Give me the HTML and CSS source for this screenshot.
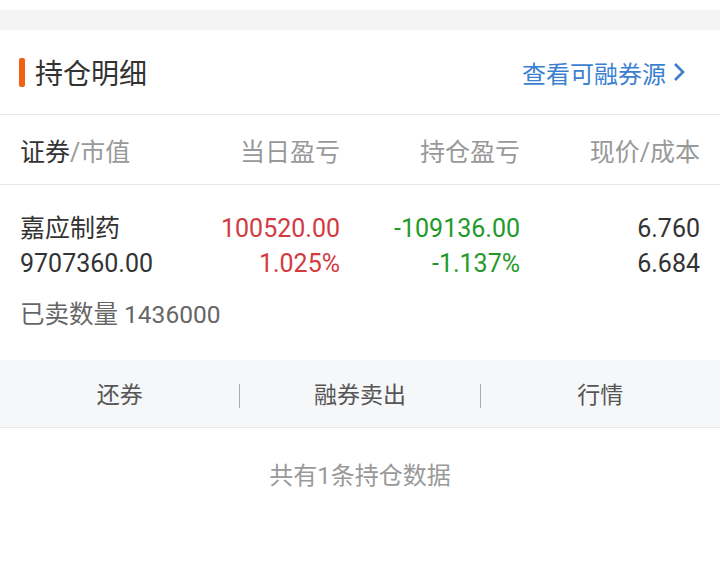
FILE: index.html
```html
<html lang="zh-CN">

<head>
  <meta charset="utf-8" />
  <title>持仓明细</title>
  <meta name="viewport" content="width=device-width, initial-scale=1" />
  <link rel="stylesheet" href="styles.css">
</head>

<body>
  <div class="gap"></div>

  <div class="head">
    <div class="head-title">
      <span class="mark"></span>
      <span>持仓明细</span>
    </div>
    <a class="head-link" href="#">
      查看可融券源
      <svg width="14" height="22" viewBox="0 0 14 22">
        <path d="M3 3 L11 11 L3 19" fill="none" stroke="#3b7fd1" stroke-width="2.6" />
      </svg>
    </a>
  </div>

  <div class="grid cols">
    <div><span class="dark">证券</span>/市值</div>
    <div class="num">当日盈亏</div>
    <div class="num">持仓盈亏</div>
    <div class="num">现价/成本</div>
  </div>

  <div class="item">
    <div class="grid">
      <div class="dark">嘉应制药<br>9707360.00</div>
      <div class="num up">100520.00<br>1.025%</div>
      <div class="num down">-109136.00<br>-1.137%</div>
      <div class="num dark">6.760<br>6.684</div>
    </div>
    <div class="sold">已卖数量 1436000</div>
  </div>

  <div class="actions">
    <a href="#">还券</a>
    <a href="#">融券卖出</a>
    <a href="#">行情</a>
  </div>

  <div class="total">共有1条持仓数据</div>
</body>

</html>
```

FILE: styles.css
```css
body {
  font-family: Roboto, 'Noto Sans CJK SC', sans-serif;
  margin: 0;
  background: #fff;
  color: #333;
}

* {
  box-sizing: border-box;
}

a {
  text-decoration: none;
  color: inherit;
}

.gap {
  margin-top: 10px;
  height: 20px;
  background: #f4f4f4;
}

.head {
  height: 85px;
  display: flex;
  align-items: center;
  justify-content: space-between;
  padding: 0 34px 0 19px;
  border-bottom: 1px solid #e8e8e8;
}

.head-title {
  display: flex;
  align-items: center;
  gap: 10px;
  font-size: 28px;
  color: #333;
}

.mark {
  width: 6px;
  height: 29px;
  border-radius: 2px;
  background: #ee6212;
}

.head-link {
  display: flex;
  align-items: center;
  gap: 6px;
  font-size: 24px;
  color: #3b7fd1;
}

.grid {
  display: grid;
  grid-template-columns: 1fr 180px 180px 180px;
  padding: 0 20px;
}

.num {
  text-align: right;
}

.cols {
  height: 70px;
  align-items: center;
  font-size: 25px;
  color: #999;
  border-bottom: 1px solid #e8e8e8;
}

.dark {
  color: #333;
}

.item {
  padding-top: 26px;
  height: 175px;
  font-size: 25px;
  line-height: 35px;
}

.up {
  color: #d23a3f;
}

.down {
  color: #1f9a2a;
}

.sold {
  padding: 16px 20px 0;
  font-size: 24.5px;
  color: #666;
}

.actions {
  height: 68px;
  display: flex;
  align-items: center;
  padding-top: 5px;
  background: #f6f7f9;
  border-bottom: 1px solid #e8e8e8;
}

.actions a {
  flex: 1;
  text-align: center;
  font-size: 23px;
  color: #555;
  line-height: 24px;
}

.actions a + a {
  border-left: 1px solid #aaa;
}

.total {
  padding-top: 28px;
  text-align: center;
  font-size: 24px;
  color: #999;
}
```
